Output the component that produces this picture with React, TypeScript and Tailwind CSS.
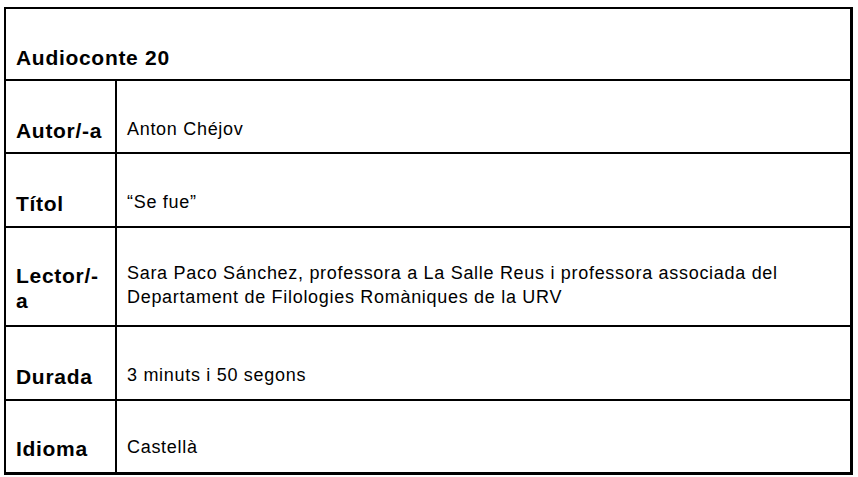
const rows = [
  { label: 'Autor/-a', value: 'Anton Chéjov', h: 'h-[73px]', lpb: 'pb-[9px]', vpb: 'pb-[11px]' },
  { label: 'Títol', value: '“Se fue”', h: 'h-[74px]', lpb: 'pb-[10px]', vpb: 'pb-[12px]' },
  {
    label: 'Lector/-\na',
    value:
      'Sara Paco Sánchez, professora a La Salle Reus i professora associada del\nDepartament de Filologies Romàniques de la URV',
    h: 'h-[99px]',
    lpb: 'pb-[12px]',
    vpb: 'pb-[16px]',
  },
  { label: 'Durada', value: '3 minuts i 50 segons', h: 'h-[74px]', lpb: 'pb-[10px]', vpb: 'pb-[12px]' },
  { label: 'Idioma', value: 'Castellà', h: 'h-[71px]', lpb: 'pb-[11px]', vpb: 'pb-[13px]' },
];

export default function App() {
  return (
    <div className="w-[858px] h-[477px] bg-white pt-[7px] pl-[4px] font-['Liberation_Sans',Arial,sans-serif] text-black">
      <div className="w-[849px] border-t-2 border-l-2 border-r-[3px] border-b-[3px] border-black">
        {/* Title row */}
        <div className="h-[72px] flex items-end pb-[9px] pl-[10px] border-b-2 border-black">
          <span className="text-[21px] leading-[24px] font-bold tracking-[0.7px]">Audioconte 20</span>
        </div>

        {rows.map((row, i) => (
          <div
            key={row.label}
            className={`${row.h} flex ${i < rows.length - 1 ? 'border-b-2 border-black' : ''}`}
          >
            <div className={`w-[111px] shrink-0 border-r-2 border-black flex items-end pl-[10px] ${row.lpb}`}>
              <span className="text-[21px] leading-[25px] font-bold tracking-[0.7px] whitespace-pre-line">
                {row.label}
              </span>
            </div>
            <div className={`flex-1 flex items-end pl-[10px] ${row.vpb}`}>
              <span className="text-[18px] leading-[24px] tracking-[0.7px] whitespace-pre-line">
                {row.value}
              </span>
            </div>
          </div>
        ))}
      </div>
    </div>
  );
}
